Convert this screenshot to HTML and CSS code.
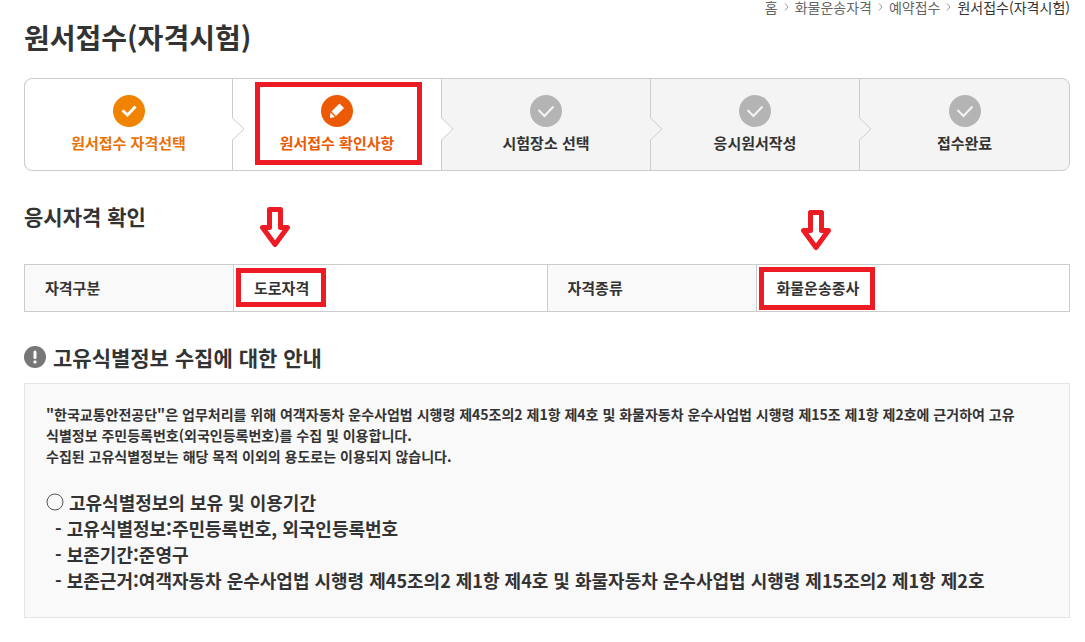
FILE: index.html
```html
<!DOCTYPE html>
<html lang="ko">
<head>
    <meta charset="UTF-8">
    <meta name="viewport" content="width=device-width, initial-scale=1.0">
    <title>원서접수(자격시험)</title>
    <link rel="stylesheet" href="styles.css">
</head>
<body>
    <div class="container">
        <nav class="breadcrumb">
            <a href="#">홈</a>
            <svg class="sep" viewBox="0 0 5 8"><path d="M1 0.5L4 4L1 7.5"/></svg>
            <a href="#">화물운송자격</a>
            <svg class="sep" viewBox="0 0 5 8"><path d="M1 0.5L4 4L1 7.5"/></svg>
            <a href="#">예약접수</a>
            <svg class="sep" viewBox="0 0 5 8"><path d="M1 0.5L4 4L1 7.5"/></svg>
            <a href="#" class="current">원서접수(자격시험)</a>
        </nav>

        <h1>원서접수(자격시험)</h1>

        <ol class="steps">
            <li class="step done">
                <svg class="step-icon" viewBox="0 0 32 32"><circle cx="16" cy="16" r="16"/><path class="check" d="M9.500 15.500L14.500 20L22.500 11.500"/></svg>
                <span>원서접수 자격선택</span>
                <svg class="arrow" viewBox="0 0 13 24"><path d="M0 0.500L12 12L0 23.500"/></svg>
            </li>
            <li class="step active">
                <svg class="step-icon" viewBox="0 0 32 32"><circle cx="16" cy="16" r="16"/><path class="pencil" d="M18.500 8.500L23 13L15 21L10.500 16.500ZM9.500 17.500L14 22L9 23Z"/></svg>
                <span>원서접수 확인사항</span>
                <svg class="arrow" viewBox="0 0 13 24"><path d="M0 0.500L12 12L0 23.500"/></svg>
                <i class="mark mark-step"></i>
            </li>
            <li class="step">
                <svg class="step-icon" viewBox="0 0 32 32"><circle cx="16" cy="16" r="16"/><path class="check" d="M8.500 15L14.500 21L23.500 11.500"/></svg>
                <span>시험장소 선택</span>
                <svg class="arrow" viewBox="0 0 13 24"><path d="M0 0.500L12 12L0 23.500"/></svg>
            </li>
            <li class="step">
                <svg class="step-icon" viewBox="0 0 32 32"><circle cx="16" cy="16" r="16"/><path class="check" d="M8.500 15L14.500 21L23.500 11.500"/></svg>
                <span>응시원서작성</span>
                <svg class="arrow" viewBox="0 0 13 24"><path d="M0 0.500L12 12L0 23.500"/></svg>
            </li>
            <li class="step">
                <svg class="step-icon" viewBox="0 0 32 32"><circle cx="16" cy="16" r="16"/><path class="check" d="M8.500 15L14.500 21L23.500 11.500"/></svg>
                <span>접수완료</span>
            </li>
        </ol>

        <h2>응시자격 확인</h2>

        <table class="info-table">
            <tr>
                <th scope="row">자격구분</th>
                <td>
                    <span class="value">도로자격<i class="mark mark-road"></i></span>
                    <svg class="pointer pointer-road" viewBox="0 0 34 42"><path d="M11.500 3.500H22.500V21.500H29.500L17 38.500L4.500 21.500H11.500Z"/></svg>
                </td>
                <th scope="row">자격종류</th>
                <td>
                    <span class="value">화물운송종사<i class="mark mark-cargo"></i></span>
                    <svg class="pointer pointer-cargo" viewBox="0 0 34 42"><path d="M11.500 3.500H22.500V21.500H29.500L17 38.500L4.500 21.500H11.500Z"/></svg>
                </td>
            </tr>
        </table>

        <h2 class="notice-title">
            <svg class="notice-icon" viewBox="0 0 22 22"><circle cx="11" cy="11" r="11"/><rect x="9.500" y="4.500" width="3" height="8.500" rx="1.500"/><rect x="9.500" y="14.500" width="3" height="3" rx="1"/></svg>
            고유식별정보 수집에 대한 안내
        </h2>

        <div class="notice">
            <p>"한국교통안전공단"은 업무처리를 위해 여객자동차 운수사업법 시행령 제45조의2 제1항 제4호 및 화물자동차 운수사업법 시행령 제15조 제1항 제2호에 근거하여 고유<br>식별정보 주민등록번호(외국인등록번호)를 수집 및 이용합니다.<br>수집된 고유식별정보는 해당 목적 이외의 용도로는 이용되지 않습니다.</p>
            <div class="retention">
                <p class="retention-title"><svg class="ring" viewBox="0 0 18 18"><circle cx="9" cy="9" r="8"/></svg>고유식별정보의 보유 및 이용기간</p>
                <ul>
                    <li>- 고유식별정보:주민등록번호, 외국인등록번호</li>
                    <li>- 보존기간:준영구</li>
                    <li>- 보존근거:여객자동차 운수사업법 시행령 제45조의2 제1항 제4호 및 화물자동차 운수사업법 시행령 제15조의2 제1항 제2호</li>
                </ul>
            </div>
        </div>
    </div>
</body>
</html>
```
FILE: styles.css
```css
* {
    margin: 0;
    padding: 0;
    box-sizing: border-box;
}

body {
    font-family: "Noto Sans CJK KR", sans-serif;
    font-size: 15px;
    font-weight: 700;
    color: #333;
    background: #fff;
}

.container {
    padding: 0 15px 24px 24px;
}

ol, ul {
    list-style: none;
}

svg {
    display: block;
    flex: none;
}

/* breadcrumb */
.breadcrumb {
    display: flex;
    justify-content: flex-end;
    align-items: center;
    gap: 6px;
    font-size: 14px;
    line-height: 14px;
    font-weight: 400;
}

.breadcrumb a {
    color: #666;
    text-decoration: none;
}

.breadcrumb .current {
    color: #333;
}

.sep {
    width: 5px;
    height: 8px;
    fill: none;
    stroke: #999;
}

h1 {
    margin-bottom: 18px;
    font-size: 28px;
    line-height: 46px;
    font-weight: 700;
}

/* steps */
.steps {
    display: flex;
    border: 1px solid #ccc;
    border-radius: 8px;
    background: #f4f4f4;
}

.step {
    position: relative;
    flex: 1 1 20%;
    display: flex;
    flex-direction: column;
    align-items: center;
    gap: 4px;
    padding: 16px 0 15px;
    line-height: 24px;
    border-right: 1px solid #ccc;
}

.step:first-child {
    margin-left: -1px;
    border-left: 1px solid #ccc;
    border-radius: 8px 0 0 8px;
}

.step:last-child {
    border-right: 0;
}

.step-icon {
    width: 32px;
    height: 32px;
    fill: #b4b4b4;
}

.check {
    fill: none;
    stroke: #f4f4f4;
    stroke-width: 2;
}

.done, .active {
    background: #fff;
}

.done {
    color: #e97207;
}

.done .step-icon {
    fill: #f08300;
}

.done .check {
    stroke: #fff;
    stroke-width: 3;
}

.active {
    color: #ec5a05;
}

.active .step-icon {
    fill: #ec5a05;
}

.step-icon .check {
    fill: none;
}

.step-icon .pencil {
    fill: #fff;
}

.arrow {
    position: absolute;
    top: 38px;
    right: -13px;
    z-index: 1;
    width: 13px;
    height: 24px;
    fill: #f4f4f4;
    stroke: #ccc;
}

.done .arrow, .active .arrow {
    fill: #fff;
}

/* red highlights */
.mark {
    position: absolute;
    border: 5px solid #ed1c24;
}

.mark-step {
    top: 3px;
    bottom: 5px;
    left: 22px;
    right: 19px;
}

.mark-road {
    inset: -9px -17px -8px -18px;
}

.mark-cargo {
    inset: -10px -16px -11px -18px;
}

.pointer {
    position: absolute;
    width: 34px;
    height: 42px;
    fill: none;
    stroke: #ed1c24;
    stroke-width: 5;
    stroke-linejoin: round;
}

.pointer-road {
    top: -59px;
    left: 24px;
}

.pointer-cargo {
    top: -56px;
    left: 42px;
}

h2 {
    margin-top: 28px;
    font-size: 21px;
    line-height: 34px;
    font-weight: 700;
}

/* qualification table */
.info-table {
    width: 100%;
    margin-top: 31px;
    table-layout: fixed;
    border-collapse: collapse;
}

.info-table th, .info-table td {
    position: relative;
    height: 47px;
    padding: 0 20px;
    line-height: 22px;
    font-weight: 700;
    text-align: left;
    border: 1px solid #ccc;
}

.info-table th {
    width: 20%;
    background: #f9f9f9;
}

.info-table td {
    width: 30%;
}

.value {
    position: relative;
    display: inline-block;
}

/* notice */
.notice-title {
    display: flex;
    align-items: center;
    gap: 7px;
}

.notice-icon {
    width: 22px;
    height: 22px;
    fill: #777;
}

.notice-icon rect {
    fill: #fff;
}

.notice {
    margin-top: 9px;
    padding: 20px 20px 24px 21px;
    font-size: 14px;
    line-height: 21px;
    border: 1px solid #e5e5e5;
    background: #f9f9f9;
}

.retention {
    margin-top: 22px;
    font-size: 18px;
    line-height: 26px;
}

.retention-title {
    display: flex;
    align-items: center;
    gap: 5px;
}

.ring {
    width: 18px;
    height: 18px;
    fill: none;
    stroke: #555;
}

.retention li {
    padding-left: 9px;
}
```
